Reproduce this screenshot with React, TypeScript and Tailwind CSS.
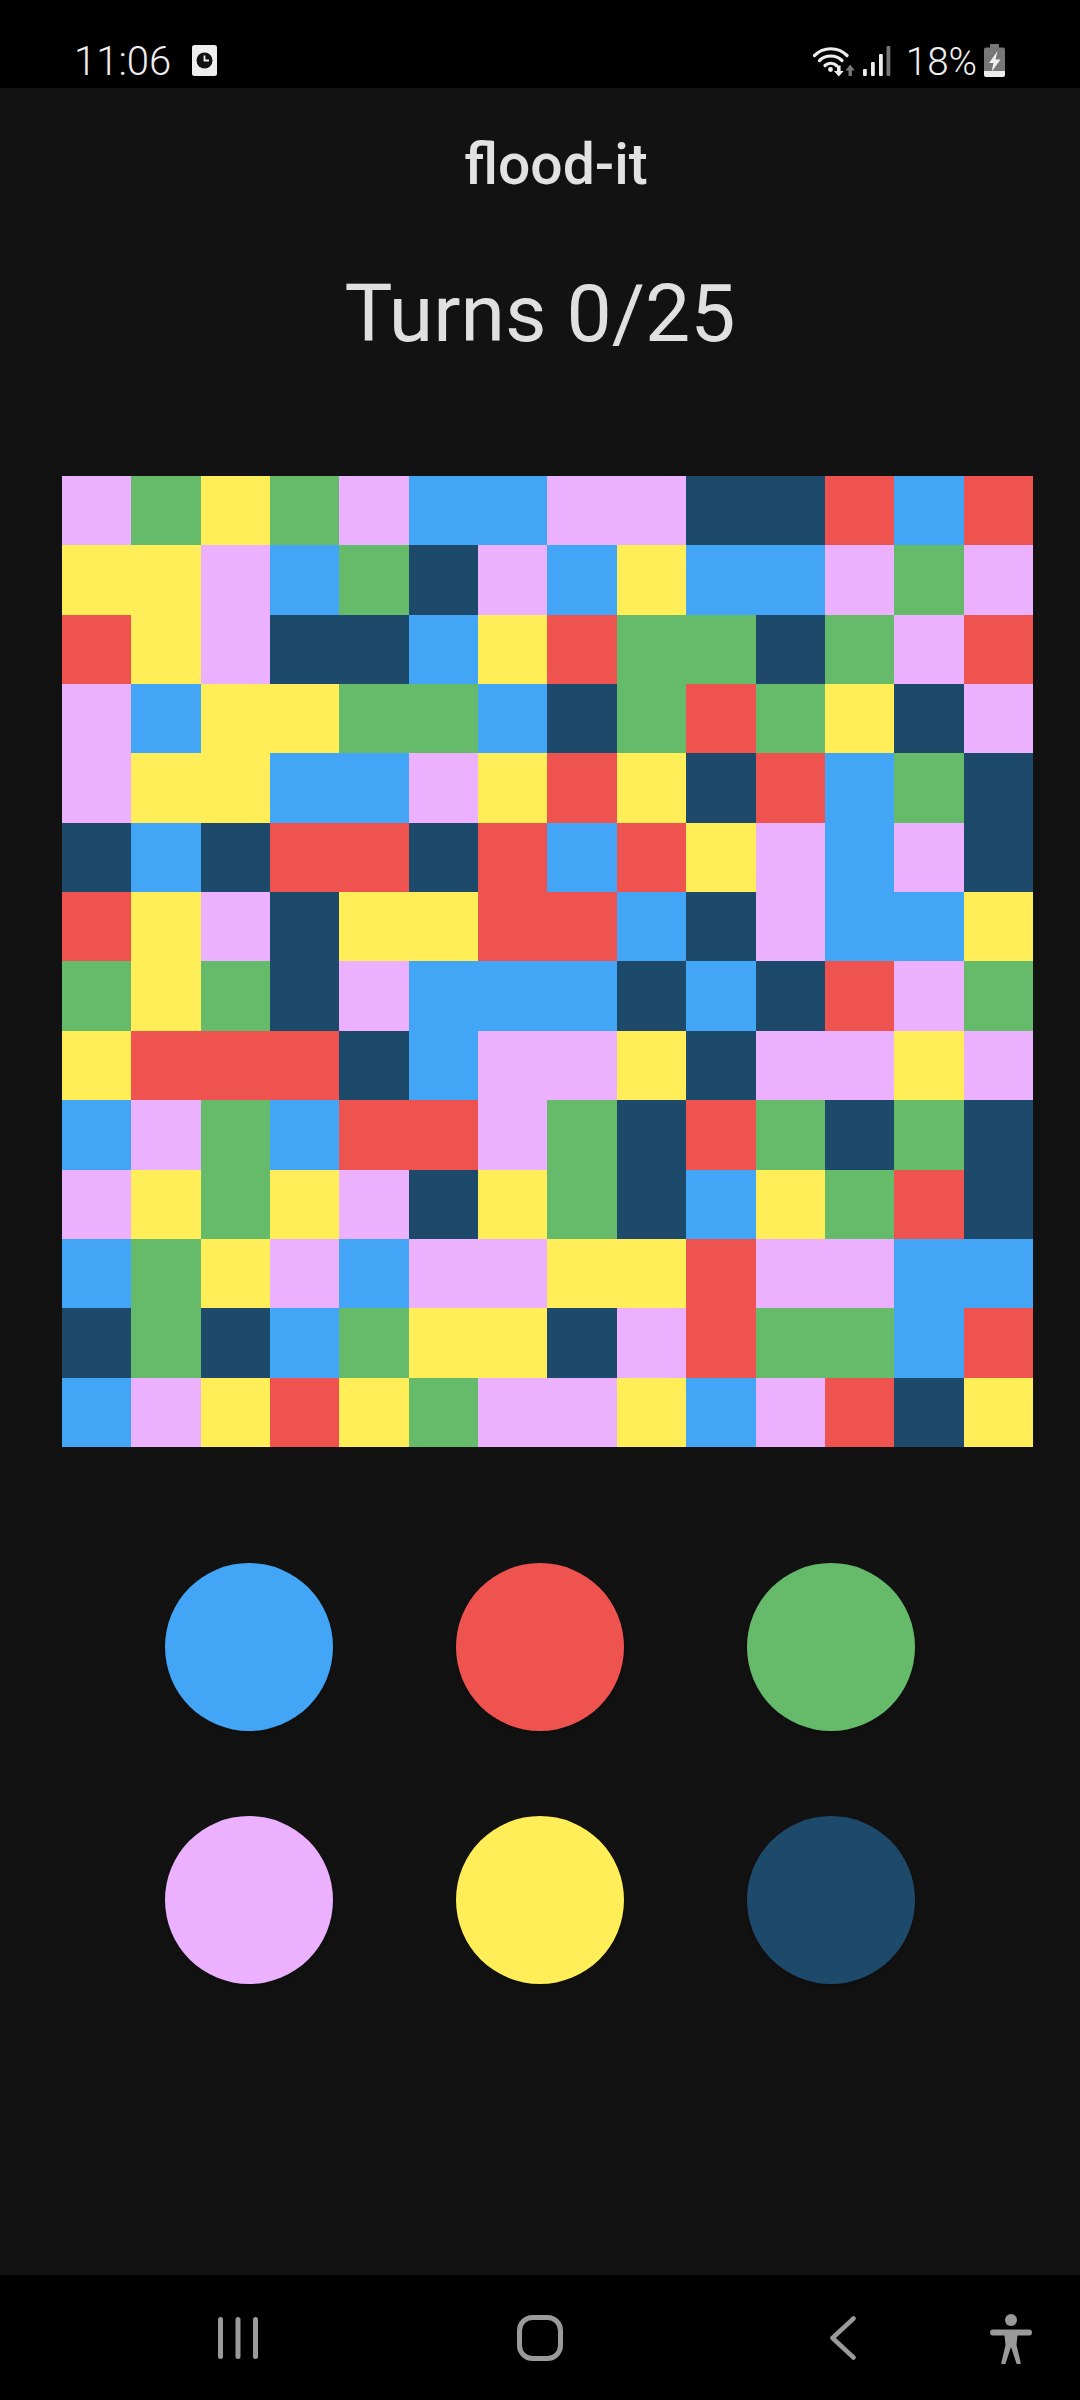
const rows = [
  "PGYGPBBPPDDRBR",
  "YYPBGDPBYBBPGP",
  "RYPDDBYRGGDGPR",
  "PBYYGGBDGRGYDP",
  "PYYBBPYRYDRBGD",
  "DBDRRDRBRYPBPD",
  "RYPDYYRRBDPBBY",
  "GYGDPBBBDBDRPG",
  "YRRRDBPPYDPPYP",
  "BPGBRRPGDRGDGD",
  "PYGYPDYGDBYGRD",
  "BGYPBPPYYRPPBB",
  "DGDBGYYDPRGGBR",
  "BPYRYGPPYBPRDY",
];

const cellClass: Record<string, string> = {
  P: "bg-[#ebb1fe]",
  G: "bg-[#66bb6a]",
  Y: "bg-[#ffee58]",
  B: "bg-[#42a5f5]",
  R: "bg-[#ef5350]",
  D: "bg-[#1d4a6b]",
};

const buttons = ["B", "R", "G", "P", "Y", "D"];

function ClockBadge() {
  return (
    <svg width="25" height="31" viewBox="0 0 25 31" className="ml-[21px]">
      <rect x="0" y="0" width="25" height="31" rx="2.5" fill="#eeeeee" />
      <circle cx="12.5" cy="15.5" r="8" fill="#111111" />
      <path d="M12.5 10.5V15.5H17" stroke="#eeeeee" strokeWidth="1.8" fill="none" />
    </svg>
  );
}

function Wifi() {
  return (
    <svg width="42" height="32" viewBox="0 0 42 32">
      <path d="M1.5 10.5C10.5 1.5 25 1.5 34 10.5" stroke="#eeeeee" strokeWidth="3.2" fill="none" strokeLinecap="round" />
      <path d="M6.5 15.5C12.5 9.5 23 9.5 29 15.5" stroke="#eeeeee" strokeWidth="3.2" fill="none" strokeLinecap="round" />
      <path d="M12 20.5C15 17.5 20.5 17.5 23.5 20.5" stroke="#eeeeee" strokeWidth="3.2" fill="none" strokeLinecap="round" />
      <circle cx="17.5" cy="24.5" r="2.4" fill="#eeeeee" />
      <path d="M24 20.5h3.600v5.500h3l-4.800 5.500-4.800-5.500h3z" fill="#eeeeee" />
      <path d="M35.500 31v-5.500h-3l4.700-6 4.700 6h-3v5.500z" fill="#777777" />
    </svg>
  );
}

function Signal() {
  return (
    <svg width="28" height="30" viewBox="0 0 28 30">
      <rect x="0" y="23" width="3.800" height="7" rx="1" fill="#eeeeee" />
      <rect x="8" y="16" width="3.800" height="14" rx="1" fill="#eeeeee" />
      <rect x="16" y="8" width="3.800" height="22" rx="1" fill="#eeeeee" />
      <rect x="23.500" y="0" width="3.800" height="30" rx="1" fill="#777777" />
    </svg>
  );
}

function Battery() {
  return (
    <svg width="21" height="33" viewBox="0 0 21 33">
      <rect x="6" y="0" width="9" height="4" fill="#777777" />
      <path d="M2 3.500H19A2 2 0 0 1 21 5.500V27H0V5.500A2 2 0 0 1 2 3.500Z" fill="#777777" />
      <path d="M0 27H21V31A2 2 0 0 1 19 33H2A2 2 0 0 1 0 31Z" fill="#eeeeee" />
      <path d="M13.500 7L5 19H9.500L7.500 28L16.500 15.500H11.500L13.500 7Z" fill="#eeeeee" />
    </svg>
  );
}

function Recents() {
  return (
    <svg width="41" height="42" viewBox="0 0 41 42">
      <rect x="0" y="0" width="5" height="42" rx="2.500" fill="#9a9a9a" />
      <rect x="17.500" y="0" width="5" height="42" rx="2.500" fill="#9a9a9a" />
      <rect x="35" y="0" width="5" height="42" rx="2.500" fill="#9a9a9a" />
    </svg>
  );
}

function Home() {
  return (
    <svg width="46" height="46" viewBox="0 0 46 46">
      <rect x="2.500" y="2.500" width="41" height="41" rx="13" fill="none" stroke="#9a9a9a" strokeWidth="5" />
    </svg>
  );
}

function Back() {
  return (
    <svg width="26" height="44" viewBox="0 0 26 44">
      <path d="M23.500 2.500L2.500 22L23.500 41.500" fill="none" stroke="#9a9a9a" strokeWidth="4.500" strokeLinecap="round" strokeLinejoin="round" />
    </svg>
  );
}

function Accessibility() {
  return (
    <svg width="42" height="50" viewBox="0 0 42 50">
      <ellipse cx="21" cy="6" rx="6" ry="6" fill="#9a9a9a" />
      <path d="M3 15.500H39A2.700 2.700 0 0 1 39 21.500H27.500L26.500 31L30.500 48A1.800 1.800 0 0 1 26.500 49.500L21 33L15.500 49.500A1.800 1.800 0 0 1 11.500 48L15.500 31L14.500 21.500H3A2.700 2.700 0 0 1 3 15.500Z" fill="#9a9a9a" />
    </svg>
  );
}

export default function App() {
  return (
    <div className="flex flex-col w-[1080px] h-[2400px] bg-[#121212] overflow-hidden font-['Roboto',sans-serif]">
      <div className="flex items-center h-[88px] bg-black pl-[74px] pr-[75px] pt-[33px] shrink-0">
        <span className="mt-[2px] text-[40px] leading-[40px] text-[#eeeeee] font-light">11:06</span>
        <ClockBadge />
        <div className="flex-1" />
        <div className="flex items-center">
          <Wifi />
          <div className="ml-[8px]"><Signal /></div>
          <span className="mt-[2px] ml-[15px] text-[38.500px] leading-[38px] text-[#eeeeee] font-light">18%</span>
          <div className="ml-[7px]"><Battery /></div>
        </div>
      </div>

      <div className="flex-1 flex flex-col">
        <div className="h-[152px] flex items-center justify-center pl-[32px] shrink-0">
          <span className="text-[57px] leading-none font-medium text-[#e2e2e2]">flood-it</span>
        </div>
        <div className="h-[148px] flex items-center justify-center shrink-0">
          <span className="text-[80.500px] leading-none text-[#e0e0e0]">Turns 0/25</span>
        </div>
        <div className="ml-[62px] mt-[88px] w-[971px] h-[971px] grid grid-cols-[repeat(14,1fr)] grid-rows-[repeat(14,1fr)] shrink-0">
          {rows.flatMap((row, r) =>
            row.split("").map((c, i) => <div key={`${r}-${i}`} className={cellClass[c]} />)
          )}
        </div>
        <div className="mt-[116px] mx-auto grid grid-cols-[repeat(3,291px)] gap-y-[85px] justify-items-center">
          {buttons.map((c) => (
            <div key={c} className={`w-[168px] h-[168px] rounded-full shadow-md ${cellClass[c]}`} />
          ))}
        </div>
      </div>

      <div className="relative flex items-center h-[125px] bg-black shrink-0">
        <div className="absolute left-[218px] top-[42px]"><Recents /></div>
        <div className="absolute left-[517px] top-[40px]"><Home /></div>
        <div className="absolute left-[830px] top-[41px]"><Back /></div>
        <div className="absolute left-[990px] top-[39px]"><Accessibility /></div>
      </div>
    </div>
  );
}
